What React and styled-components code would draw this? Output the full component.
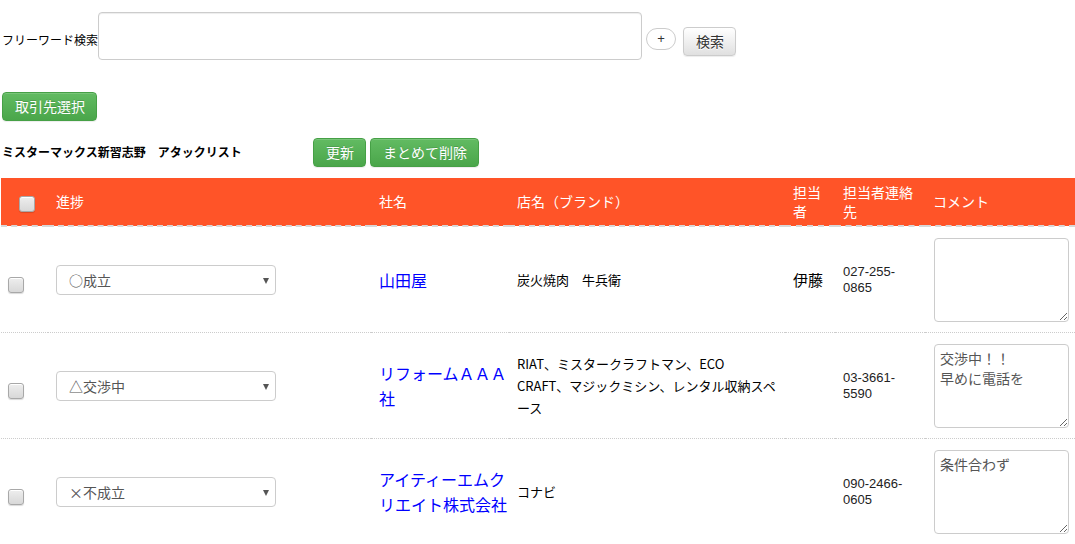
import React from 'react';
import styled, { createGlobalStyle } from 'styled-components';

const GlobalStyle = createGlobalStyle`
  html, body {
    margin: 0;
    padding: 0;
    background: #fff;
    overflow: hidden;
  }
  body {
    font-family: "Noto Sans CJK JP", "Liberation Sans", sans-serif;
    font-size: 12px;
    color: #000;
  }
`;

const Page = styled.div`
  padding: 12px 0 0 1px;
`;

const SearchRow = styled.div`
  display: flex;
  align-items: center;
  padding-left: 1px;
`;

const Label = styled.span`
  font-size: 12px;
  line-height: 16px;
  margin-top: 8px;
`;

const SearchInput = styled.input`
  width: 544px;
  height: 48px;
  box-sizing: border-box;
  border: 1px solid #ccc;
  border-radius: 4px;
  box-shadow: inset 0 1px 1px rgba(0, 0, 0, .075);
  font-size: 14px;
  padding: 6px 12px;
  outline: none;
`;

const PlusButton = styled.button`
  width: 30px;
  height: 22px;
  margin: 6px 0 0 4px;
  border: 1px solid #ccc;
  border-radius: 11px;
  background: #fff;
  font-family: "Liberation Sans", sans-serif;
  font-size: 13px;
  line-height: 18px;
  padding: 0;
  color: #333;
`;

const Button = styled.button`
  box-sizing: border-box;
  height: 29px;
  padding: 0 11px 0 12px;
  border-radius: 4px;
  font-family: "Noto Sans CJK JP", sans-serif;
  font-size: 14px;
  line-height: 27px;
  cursor: pointer;
  border: 1px solid ${p => (p.$green ? '#46a046' : '#ccc')};
  color: ${p => (p.$green ? '#fff' : '#333')};
  background: ${p =>
    p.$green
      ? 'linear-gradient(to bottom, #62bb62 0%, #4aa64a 100%)'
      : 'linear-gradient(to bottom, #fff 0%, #e0e0e0 100%)'};
  box-shadow: inset 0 1px 0 rgba(255, 255, 255, .15), 0 1px 1px rgba(0, 0, 0, .075);
  text-shadow: ${p => (p.$green ? '0 -1px 0 rgba(0,0,0,.15)' : '0 1px 0 #fff')};
`;

const SearchButton = styled(Button)`
  margin: 11px 0 0 7px;
`;

const SelectBar = styled.div`
  margin-top: 32px;
  padding-left: 1px;
`;

const TitleRow = styled.div`
  display: flex;
  align-items: center;
  gap: 4px;
  margin-top: 17px;
  padding-left: 1px;
`;

const Title = styled.span`
  width: 307px;
  font-weight: bold;
  font-size: 12px;
  line-height: 16px;
  margin-top: -1px;
`;

const Table = styled.table`
  margin-top: 11px;
  width: 1074px;
  table-layout: fixed;
  border-collapse: collapse;
`;

const HeadCell = styled.th`
  background: #ff5428;
  color: #fff;
  font-weight: normal;
  font-size: 14px;
  line-height: 19px;
  text-align: left;
  height: 48px;
  box-sizing: border-box;
  padding: ${p => p.$pad || '0 8px'};
  vertical-align: middle;
  border-bottom: 2px dashed #d8d8d8;
`;

const Row = styled.tr`
  border-bottom: 1px dotted #ccc;
`;

const Cell = styled.td`
  padding: ${p => p.$pad || '11px 8px 10px 8px'};
  vertical-align: middle;
  font-size: ${p => p.$size || '13px'};
  line-height: ${p => p.$lh || '22px'};
  color: #000;
  white-space: pre-line;
`;

const Check = styled.span`
  display: inline-block;
  width: 16px;
  height: 16px;
  box-sizing: border-box;
  border: 1px solid #a8a8a8;
  border-radius: 3px;
  background: linear-gradient(to bottom, #eee, #d8d8d8);
  box-shadow: 0 1px 1px rgba(0, 0, 0, .15), inset 0 1px 0 #fff;
  vertical-align: middle;
  margin-top: ${p => p.$mt || 0}px;
`;

const SelectBox = styled.div`
  position: relative;
  width: 220px;
  height: 30px;
  box-sizing: border-box;
  border: 1px solid #ccc;
  border-radius: 4px;
  padding: 0 12px;
  font-size: 14px;
  line-height: 28px;
  color: #555;
  background: #fff;
`;

const Arrow = styled.span`
  position: absolute;
  right: 6px;
  top: 12px;
  width: 0;
  height: 0;
  border-left: 3px solid transparent;
  border-right: 3px solid transparent;
  border-top: 6px solid #555;
`;

const CompanyLink = styled.a`
  color: #0000ff;
  text-decoration: none;
  font-size: 16px;
  line-height: 24px;
`;

const Phone = styled.span`
  font-family: "Liberation Sans", "Noto Sans CJK JP", sans-serif;
  font-size: 13px;
  line-height: 16px;
  color: #222;
  display: block;
`;

const Comment = styled.textarea`
  display: block;
  width: 135px;
  height: 84px;
  box-sizing: border-box;
  border: 1px solid #ccc;
  border-radius: 4px;
  padding: 3px 5px;
  font-family: "Noto Sans CJK JP", sans-serif;
  font-size: 14px;
  line-height: 20px;
  color: #555;
  resize: vertical;
  outline: none;
`;

const rows = [
  {
    status: '○成立',
    company: '山田屋',
    shop: '炭火焼肉　牛兵衛',
    person: '伊藤',
    phone: '027-255-0865',
    comment: '',
  },
  {
    status: '△交渉中',
    company: 'リフォームＡＡＡ社',
    shop: 'RIAT、ミスタークラフトマン、ECO\nCRAFT、マジックミシン、レンタル収納スペ\nース',
    person: '',
    phone: '03-3661-5590',
    comment: '交渉中！！\n早めに電話を',
  },
  {
    status: '×不成立',
    company: 'アイティーエムクリエイト株式会社',
    shop: 'コナビ',
    person: '',
    phone: '090-2466-0605',
    comment: '条件合わず',
  },
];

export default function App() {
  return (
    <Page>
      <GlobalStyle />
      <SearchRow>
        <Label>フリーワード検索</Label>
        <SearchInput type="text" />
        <PlusButton>+</PlusButton>
        <SearchButton>検索</SearchButton>
      </SearchRow>
      <SelectBar>
        <Button $green>取引先選択</Button>
      </SelectBar>
      <TitleRow>
        <Title>ミスターマックス新習志野　アタックリスト</Title>
        <Button $green>更新</Button>
        <Button $green>まとめて削除</Button>
      </TitleRow>
      <Table>
        <colgroup>
          <col style={{ width: 47 }} />
          <col style={{ width: 323 }} />
          <col style={{ width: 138 }} />
          <col style={{ width: 276 }} />
          <col style={{ width: 50 }} />
          <col style={{ width: 90 }} />
          <col style={{ width: 150 }} />
        </colgroup>
        <thead>
          <tr>
            <HeadCell $pad="0 0 0 18px"><Check $mt={2} /></HeadCell>
            <HeadCell>進捗</HeadCell>
            <HeadCell>社名</HeadCell>
            <HeadCell>店名（ブランド）</HeadCell>
            <HeadCell>担当者</HeadCell>
            <HeadCell>担当者連絡先</HeadCell>
            <HeadCell>コメント</HeadCell>
          </tr>
        </thead>
        <tbody>
          {rows.map(r => (
            <Row key={r.company}>
              <Cell $pad="11px 0 10px 7px"><Check $mt={10} /></Cell>
              <Cell>
                <SelectBox>
                  {r.status}
                  <Arrow />
                </SelectBox>
              </Cell>
              <Cell $pad="11px 0 10px 8px">
                <CompanyLink href="#">{r.company}</CompanyLink>
              </Cell>
              <Cell $pad="11px 0 10px 8px">{r.shop}</Cell>
              <Cell $size="15px" $lh="24px">{r.person}</Cell>
              <Cell><Phone>{r.phone}</Phone></Cell>
              <Cell $pad="11px 6px 10px 9px">
                <Comment defaultValue={r.comment} />
              </Cell>
            </Row>
          ))}
        </tbody>
      </Table>
    </Page>
  );
}
